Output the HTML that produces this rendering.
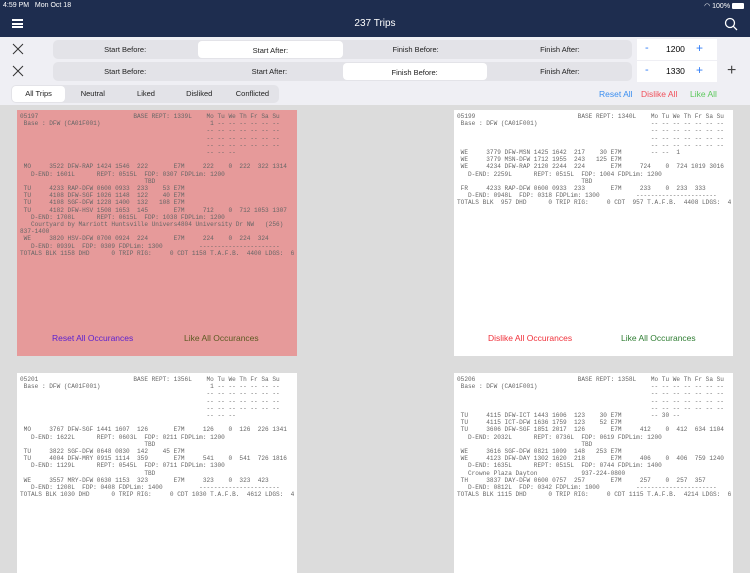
<!DOCTYPE html>
<html><head><meta charset="utf-8"><style>
*{margin:0;padding:0;box-sizing:border-box}
body{width:750px;height:562px;overflow:hidden;background:#dcdcdc;font-family:"Liberation Sans",sans-serif;position:relative}
.nav{position:absolute;left:0;top:0;width:750px;height:37px;background:#1e2d4f;color:#fff}
.row{position:absolute;left:0;width:750px;background:#efeff4}
.seg{position:absolute;background:#e3e3e8;border-radius:5px;height:19px;display:flex;font-size:7.5px;color:#222}
.seg div{flex:1;text-align:center;line-height:19px}
.seg .on{background:#fff;border-radius:4px;margin:1px}
.step{position:absolute;left:637px;width:80px;height:21px;background:#fff;font-size:8.5px}
.card{position:absolute;background:#fff;overflow:hidden}
pre{font-family:"Liberation Mono",monospace;font-size:6.1px;line-height:7.2px;color:#666;margin:3px 0 0 3px;white-space:pre}
.btn{position:absolute;top:223px;font-size:8.5px}
</style></head><body>
<div class="nav">
<div style="position:absolute;left:3px;top:2px;font-size:7px">4:59 PM&nbsp;&nbsp; Mon Oct 18</div>
<div style="position:absolute;right:6px;top:2px;font-size:7px">◠ 100% <span style="display:inline-block;width:12px;height:6px;background:#fff;border-radius:1px;vertical-align:middle"></span></div>
<div style="position:absolute;left:12px;top:19px;width:11px;height:9px;border-top:2px solid #fff;border-bottom:2px solid #fff"><div style="margin-top:1.5px;height:2px;background:#fff"></div></div>
<div style="position:absolute;left:0;width:750px;top:18px;text-align:center;font-size:10px">237 Trips</div>
<svg style="position:absolute;left:724px;top:17px" width="14" height="14"><circle cx="6" cy="6" r="4.5" stroke="#fff" stroke-width="1.3" fill="none"/><line x1="9.3" y1="9.3" x2="13" y2="13" stroke="#fff" stroke-width="1.3"/></svg>
</div>
<div class="row" style="top:37px;height:68px"></div>
<svg style="position:absolute;left:12px;top:43px" width="12" height="12"><path d="M1 1L11 11M11 1L1 11" stroke="#333" stroke-width="1"/></svg>
<svg style="position:absolute;left:12px;top:65px" width="12" height="12"><path d="M1 1L11 11M11 1L1 11" stroke="#333" stroke-width="1"/></svg>
<div class="seg" style="left:53px;top:40px;width:579px"><div>Start Before:</div><div class="on">Start After:</div><div>Finish Before:</div><div>Finish After:</div></div>
<div class="seg" style="left:53px;top:62px;width:579px"><div>Start Before:</div><div>Start After:</div><div class="on">Finish Before:</div><div>Finish After:</div></div>
<div class="step" style="top:39px"><span style="position:absolute;left:8px;top:3px;color:#2f7cf6;font-size:11px">-</span><span style="position:absolute;left:29px;top:5px">1200</span><span style="position:absolute;left:59px;top:2px;color:#2f7cf6;font-size:12px">+</span></div>
<div class="step" style="top:61px"><span style="position:absolute;left:8px;top:3px;color:#2f7cf6;font-size:11px">-</span><span style="position:absolute;left:29px;top:5px">1330</span><span style="position:absolute;left:59px;top:2px;color:#2f7cf6;font-size:12px">+</span></div>
<div style="position:absolute;left:727px;top:62px;font-size:16px;color:#444;font-weight:300">+</div>
<div class="seg" style="left:11px;top:85px;width:268px;height:18px;line-height:18px;font-size:7.5px"><div class="on" style="line-height:16px">All Trips</div><div style="line-height:18px">Neutral</div><div style="line-height:18px">Liked</div><div style="line-height:18px">Disliked</div><div style="line-height:18px">Conflicted</div></div>
<div style="position:absolute;top:89px;left:599px;font-size:8.5px;color:#3a8ef0">Reset All</div>
<div style="position:absolute;top:89px;left:641px;font-size:8.5px;color:#f0505a">Dislike All</div>
<div style="position:absolute;top:89px;left:690px;font-size:8.5px;color:#5cc85c">Like All</div>

<div class="card" style="left:17px;top:110px;width:280px;height:246px;background:#e69a9a"><pre>05197                          BASE REPT: 1339L    Mo Tu We Th Fr Sa Su
 Base : DFW (CA01F001)                              1 -- -- -- -- -- --
                                                   -- -- -- -- -- -- --
                                                   -- -- -- -- -- -- --
                                                   -- -- -- -- -- -- --
                                                   -- -- --

 MO     3522 DFW-RAP 1424 1546  222       E7M     222    0  222  322 1314
   D-END: 1601L      REPT: 0515L  FDP: 0307 FDPLim: 1200
                                  TBD
 TU     4233 RAP-DFW 0600 0933  233    53 E7M
 TU     4108 DFW-SGF 1026 1148  122    40 E7M
 TU     4108 SGF-DFW 1228 1400  132   108 E7M
 TU     4182 DFW-HSV 1508 1653  145       E7M     712    0  712 1053 1307
   D-END: 1708L      REPT: 0615L  FDP: 1038 FDPLim: 1200
   Courtyard by Marriott Huntsville Univers4804 University Dr NW   (256)
837-1400
 WE     3820 HSV-DFW 0700 0924  224       E7M     224    0  224  324
   D-END: 0939L  FDP: 0309 FDPLim: 1300          ----------------------
TOTALS BLK 1158 DHD      0 TRIP RIG:     0 CDT 1158 T.A.F.B.  4400 LDGS:  6</pre>
<div class="btn" style="left:35px;color:#5a1fd0">Reset All Occurances</div><div class="btn" style="left:167px;color:#5c5a22">Like All Occurances</div></div>

<div class="card" style="left:454px;top:110px;width:279px;height:246px"><pre>05199                            BASE REPT: 1340L    Mo Tu We Th Fr Sa Su
 Base : DFW (CA01F001)                               -- -- -- -- -- -- --
                                                     -- -- -- -- -- -- --
                                                     -- -- -- -- -- -- --
                                                     -- -- -- -- -- -- --
 WE     3779 DFW-MSN 1425 1642  217    30 E7M        -- --  1
 WE     3779 MSN-DFW 1712 1955  243   125 E7M
 WE     4234 DFW-RAP 2120 2244  224       E7M     724    0  724 1019 3016
   D-END: 2259L      REPT: 0515L  FDP: 1004 FDPLim: 1200
                                  TBD
 FR     4233 RAP-DFW 0600 0933  233       E7M     233    0  233  333
   D-END: 0948L  FDP: 0318 FDPLim: 1300          ----------------------
TOTALS BLK  957 DHD      0 TRIP RIG:     0 CDT  957 T.A.F.B.  4408 LDGS:  4</pre>
<div class="btn" style="left:34px;color:#f0303a">Dislike All Occurances</div><div class="btn" style="left:167px;color:#2e7d32">Like All Occurances</div></div>

<div class="card" style="left:17px;top:373px;width:280px;height:200px"><pre>05201                          BASE REPT: 1356L    Mo Tu We Th Fr Sa Su
 Base : DFW (CA01F001)                              1 -- -- -- -- -- --
                                                   -- -- -- -- -- -- --
                                                   -- -- -- -- -- -- --
                                                   -- -- -- -- -- -- --
                                                   -- -- --

 MO     3767 DFW-SGF 1441 1607  126       E7M     126    0  126  226 1341
   D-END: 1622L      REPT: 0603L  FDP: 0211 FDPLim: 1200
                                  TBD
 TU     3822 SGF-DFW 0648 0830  142    45 E7M
 TU     4004 DFW-MRY 0915 1114  359       E7M     541    0  541  726 1816
   D-END: 1129L      REPT: 0545L  FDP: 0711 FDPLim: 1300
                                  TBD
 WE     3557 MRY-DFW 0630 1153  323       E7M     323    0  323  423
   D-END: 1208L  FDP: 0408 FDPLim: 1400          ----------------------
TOTALS BLK 1030 DHD      0 TRIP RIG:     0 CDT 1030 T.A.F.B.  4612 LDGS:  4</pre></div>

<div class="card" style="left:454px;top:373px;width:279px;height:200px"><pre>05206                            BASE REPT: 1358L    Mo Tu We Th Fr Sa Su
 Base : DFW (CA01F001)                               -- -- -- -- -- -- --
                                                     -- -- -- -- -- -- --
                                                     -- -- -- -- -- -- --
                                                     -- -- -- -- -- -- --
 TU     4115 DFW-ICT 1443 1606  123    30 E7M        -- 30 --
 TU     4115 ICT-DFW 1636 1759  123    52 E7M
 TU     3606 DFW-SGF 1851 2017  126       E7M     412    0  412  634 1104
   D-END: 2032L      REPT: 0736L  FDP: 0619 FDPLim: 1200
                                  TBD
 WE     3616 SGF-DFW 0821 1009  148   253 E7M
 WE     4123 DFW-DAY 1302 1620  218       E7M     406    0  406  759 1240
   D-END: 1635L      REPT: 0515L  FDP: 0744 FDPLim: 1400
   Crowne Plaza Dayton            937-224-0800
 TH     3837 DAY-DFW 0600 0757  257       E7M     257    0  257  357
   D-END: 0812L  FDP: 0342 FDPLim: 1000          ----------------------
TOTALS BLK 1115 DHD      0 TRIP RIG:     0 CDT 1115 T.A.F.B.  4214 LDGS:  6</pre></div>
</body></html>
